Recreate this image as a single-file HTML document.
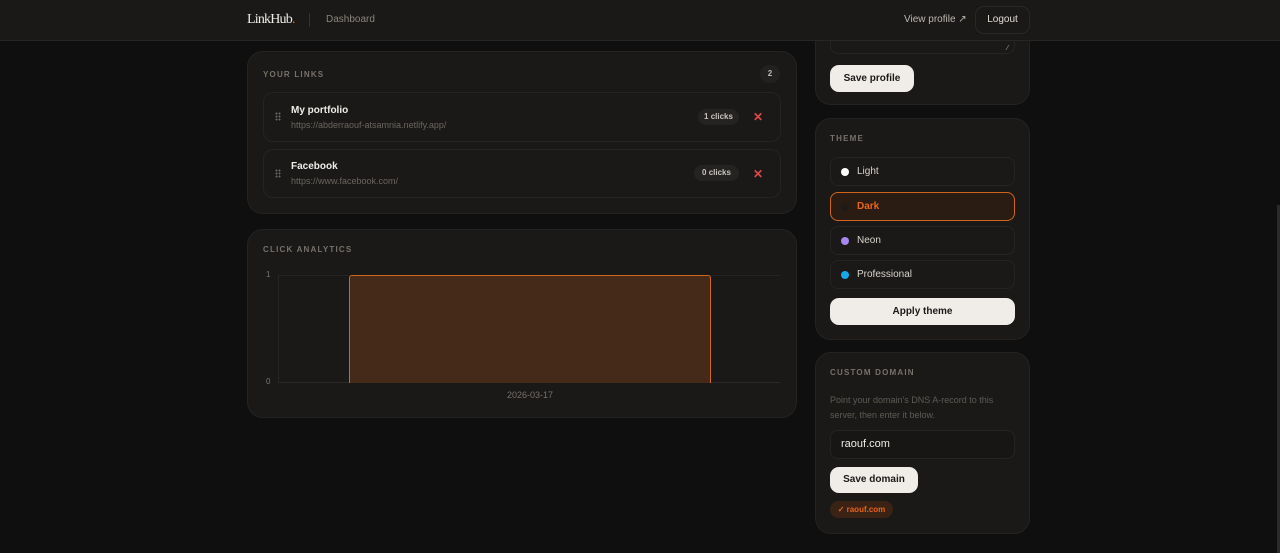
<!DOCTYPE html>
<html><head><style>
*{box-sizing:border-box;margin:0;padding:0}
body{width:1280px;height:553px;background:#0f0f0f;font-family:"Liberation Sans",sans-serif;color:#e8e4de;position:relative;overflow:hidden}
.a{position:absolute}
.card{position:absolute;background:#1a1918;border:1px solid #252321;border-radius:16px}
.lbl{font-size:8px;font-weight:bold;letter-spacing:1.2px;color:#77716a}
.row{position:absolute;border:1px solid #262422;border-radius:10px;background:#1a1918}
.btn{position:absolute;background:#f0ede8;color:#1a1918;border-radius:9px;font-size:10px;font-weight:bold;text-align:center}
.dot{position:absolute;width:8px;height:8px;border-radius:50%}
.opt{position:absolute;left:14px;width:185px;height:29px;border:1px solid #262422;border-radius:8px;font-size:10px;color:#d8d3cc}
.grip{position:absolute;left:11px;width:6px;height:9px;background-image:radial-gradient(circle,#666 0.9px,transparent 1.1px);background-size:3px 3px}
.nav{z-index:5}
</style></head><body>
<div class="card" style="left:815px;top:-20px;width:215px;height:125px">
 <div class="a" style="left:14px;top:20px;width:185px;height:53px;border:1px solid #262422;border-radius:8px"></div>
 <div class="a" style="left:191px;top:64px;font-size:7px;color:#aaa">⁄</div>
 <div class="btn" style="left:14px;top:84px;width:84px;height:27px;line-height:27px">Save profile</div>
</div>
<div class="a nav" style="left:0;top:0;width:1280px;height:41px;background:#1a1918;border-bottom:1px solid #282624"></div>
<div class="a nav" style="left:247px;top:12px;font-family:'Liberation Serif',serif;font-size:14px;color:#f0ede8;letter-spacing:-0.8px">LinkHub<span style="color:#e8651a">.</span></div>
<div class="a nav" style="left:309px;top:13px;width:1px;height:14px;background:#333"></div>
<div class="a nav" style="left:326px;top:14px;font-size:10px;color:#8a847c">Dashboard</div>
<div class="a nav" style="left:904px;top:14px;font-size:10px;color:#bdb7af">View profile ↗</div>
<div class="a nav" style="left:975px;top:6px;width:55px;height:28px;border:1px solid #2a2826;border-radius:9px;font-size:10px;color:#e0dbd4;text-align:center;line-height:26px">Logout</div>

<div class="card" style="left:247px;top:51px;width:550px;height:163px">
 <div class="a lbl" style="left:15px;top:18px">YOUR LINKS</div>
 <div class="a" style="left:512px;top:13px;width:20px;height:18px;border-radius:9px;background:#222120;font-size:8px;font-weight:bold;text-align:center;line-height:18px;color:#bbb">2</div>
 <div class="row" style="left:15px;top:40px;width:518px;height:50px">
  <div class="grip" style="top:19px"></div>
  <div class="a" style="left:27px;top:12px;font-size:10px;font-weight:bold;color:#f0ede8">My portfolio</div>
  <div class="a" style="left:27px;top:27px;font-size:9px;color:#6a655e">https://abderraouf-atsamnia.netlify.app/</div>
  <div class="a" style="left:434px;top:16px;width:41px;height:16px;border-radius:8px;background:#242322;font-size:8px;font-weight:bold;color:#c8c3bc;text-align:center;line-height:16px">1 clicks</div>
  <div class="a" style="left:489px;top:17px;font-size:12px;color:#e04848;font-weight:bold">✕</div>
 </div>
 <div class="row" style="left:15px;top:97px;width:518px;height:49px">
  <div class="grip" style="top:19px"></div>
  <div class="a" style="left:27px;top:11px;font-size:10px;font-weight:bold;color:#f0ede8">Facebook</div>
  <div class="a" style="left:27px;top:26px;font-size:9px;color:#6a655e">https://www.facebook.com/</div>
  <div class="a" style="left:430px;top:15px;width:45px;height:16px;border-radius:8px;background:#242322;font-size:8px;font-weight:bold;color:#c8c3bc;text-align:center;line-height:16px">0 clicks</div>
  <div class="a" style="left:489px;top:17px;font-size:12px;color:#e04848;font-weight:bold">✕</div>
 </div>
</div>

<div class="card" style="left:247px;top:229px;width:550px;height:189px">
 <div class="a lbl" style="left:15px;top:15px">CLICK ANALYTICS</div>
 <div class="a" style="left:18px;top:40px;font-size:8px;color:#777">1</div>
 <div class="a" style="left:18px;top:147px;font-size:8px;color:#777">0</div>
 <div class="a" style="left:30px;top:45px;width:502px;height:1px;background:#262422"></div>
 <div class="a" style="left:30px;top:152px;width:502px;height:1px;background:#2c2a28"></div>
 <div class="a" style="left:30px;top:45px;width:1px;height:108px;background:#262422"></div>
 <div class="a" style="left:101px;top:45px;width:362px;height:108px;background:#452a1a;border:1.5px solid #d0651e;border-bottom:none;border-radius:3px 3px 0 0"></div>
 <div class="a" style="left:259px;top:160px;font-size:9px;color:#77716a">2026-03-17</div>
</div>

<div class="card" style="left:815px;top:118px;width:215px;height:222px">
 <div class="a lbl" style="left:14px;top:15px">THEME</div>
 <div class="opt" style="top:38px"><div class="dot" style="left:10px;top:10px;background:#fff"></div><span class="a" style="left:26px;top:8px">Light</span></div>
 <div class="opt" style="top:73px;border-color:#d0651e;background:#2a1c12;color:#e8651a;font-weight:bold"><div class="dot" style="left:10px;top:10px;background:#1e1a16"></div><span class="a" style="left:26px;top:8px">Dark</span></div>
 <div class="opt" style="top:107px"><div class="dot" style="left:10px;top:10px;background:#a985f0"></div><span class="a" style="left:26px;top:8px">Neon</span></div>
 <div class="opt" style="top:141px"><div class="dot" style="left:10px;top:10px;background:#18a8ea"></div><span class="a" style="left:26px;top:8px">Professional</span></div>
 <div class="btn" style="left:14px;top:179px;width:185px;height:27px;line-height:27px">Apply theme</div>
</div>

<div class="card" style="left:815px;top:352px;width:215px;height:182px">
 <div class="a lbl" style="left:14px;top:15px">CUSTOM DOMAIN</div>
 <div class="a" style="left:14px;top:40px;font-size:9px;line-height:14.5px;color:#5f5a54;width:185px">Point your domain's DNS A-record to this server, then enter it below.</div>
 <div class="a" style="left:14px;top:77px;width:185px;height:29px;border:1px solid #262422;border-radius:8px;background:#171615;font-size:11px;color:#f0ede8;padding:7px 0 0 10px">raouf.com</div>
 <div class="btn" style="left:14px;top:114px;width:88px;height:26px;line-height:26px">Save domain</div>
 <div class="a" style="left:14px;top:148px;width:63px;height:17px;border-radius:9px;background:#3a2214;color:#e8651a;font-size:8px;font-weight:bold;text-align:center;line-height:17px">✓ raouf.com</div>
</div>
<div class="a" style="left:1277px;top:205px;width:3px;height:348px;background:#2a2a2a"></div>
</body></html>
